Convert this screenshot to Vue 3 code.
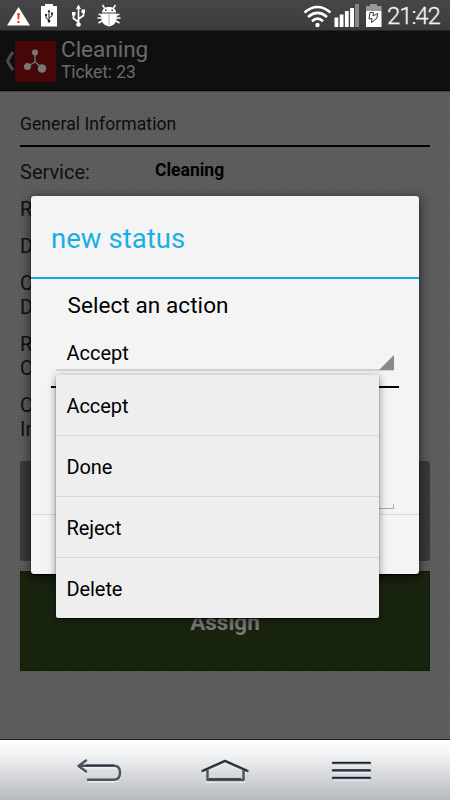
<script setup>
const fields = [
  { label: ['Service:'], value: 'Cleaning' },
  { label: ['R'] },
  { label: ['D'] },
  { label: ['C', 'D'] },
  { label: ['R', 'C'] },
  { label: ['C', 'In'] },
]
const options = ['Accept', 'Done', 'Reject', 'Delete']
</script>

<template>
  <div class="screen">
    <header class="status">
      <svg class="tray" width="124" height="30" viewBox="0 0 124 30">
        <path d="M18.500 7L30 25.500H7Z" fill="#fff" />
        <path d="M17.300 13h2.400l-.5 6.500h-1.400zM17.500 21h2v2h-2z" fill="#f02818" />
        <path d="M41 6h4V4h8v2h4v20.500H41z" fill="#fff" />
        <g fill="none" stroke="#222" stroke-width="1"><path d="M49 11v11M49 20l-3-2v-3M49 18l3-2v-3" /></g>
        <path d="M47.500 12L49 9.500l1.500 2.500zM47.800 20h2.400v2.500h-2.400zM45 14h2v2h-2zM51 12.500h2v2h-2z" fill="#222" />
        <g fill="none" stroke="#fff" stroke-width="1.700"><path d="M78.500 8v15M78.500 22l-5-3.500v-4M78.500 19l5-3.500v-4" /></g>
        <path d="M76 9l2.500-4.500L81 9zM72 12h3.500v3.500H72zM81.500 9.500H85V13h-3.500z" fill="#fff" />
        <circle cx="78.500" cy="24.500" r="2.300" fill="#fff" />
        <path d="M102 12.500C102 9 105 7 109 7s7 2 7 5.500z" fill="#fff" />
        <path d="M101.500 13.500h15v6.500q-1 5-7.500 6.500-6.500-1.500-7.500-6.500z" fill="#fff" />
        <path d="M104.500 8l-2-3M113.500 8l2-3M102 16.500l-1.500-2h-2M102 18h-4.500M102 21l-3.500 2M116 16.500l1.500-2h2M116 18h4.500M116 21l3.500 2" fill="none" stroke="#fff" stroke-width="1.500" />
        <path d="M109 14v11" stroke="#aaa" stroke-width="1" />
        <path d="M105 9.500h1.500V11H105zM111.500 9.500h1.500V11h-1.500z" fill="#333" />
      </svg>
      <svg class="signals" width="84" height="30" viewBox="0 0 84 30">
        <g fill="none" stroke="#fff" stroke-width="2.600">
          <path d="M1.500 12.500Q14.500 1.500 27.500 12.500M5 17Q14.500 8.800 24 17M9 21.200Q14.500 16.200 20 21.200" />
        </g>
        <circle cx="14.500" cy="25" r="2.200" fill="#fff" />
        <path d="M31.500 17.500h3.800V27h-3.800zM36.700 14.500h3.800V27h-3.800zM41.900 11h3.800v16h-3.800zM47.100 8h3.900v19h-3.900z" fill="#fff" />
        <path d="M52 4h4v23h-4z" fill="#888" />
        <path d="M63 6h4V4h7v2h4.500v5H63z" fill="#999" />
        <path d="M63 11h15.500v16H63z" fill="#fff" />
        <path d="M67 12.500h3.500l-.5 3.500 4.500-2.500-.5 4.500-5.500 4.500.5-4-3 .5z" fill="#fff" stroke="#333" stroke-width="1" />
      </svg>
      <span class="clock">21:42</span>
    </header>

    <header class="bar">
      <svg class="up" width="10" height="20" viewBox="0 0 10 20"><path d="M8 1Q5 5 2.500 10q2.500 5 5.500 9" fill="none" stroke="#4a4a4a" stroke-width="3" /></svg>
      <svg class="logo" width="41" height="41" viewBox="0 0 41 41">
        <path d="M0 0h41v41H0z" fill="#470708" />
        <path d="M20 12v9l-7.500 4.500M20 21l7.500 6" fill="none" stroke="#777" stroke-width="1.300" />
        <circle cx="20" cy="11.500" r="3" fill="#777" />
        <circle cx="12.500" cy="25.500" r="3.500" fill="#777" />
        <circle cx="27" cy="27.500" r="4.300" fill="#777" />
      </svg>
      <div class="heading">
        <div class="name">Cleaning</div>
        <div class="ticket">Ticket: 23</div>
      </div>
    </header>

    <main class="content">
      <h2 class="section">General Information</h2>
      <div class="fields">
        <div v-for="(f, i) in fields" :key="i" class="field">
          <div class="label"><div v-for="l in f.label" :key="l">{{ l }}</div></div>
          <div class="value">{{ f.value }}</div>
        </div>
      </div>
      <div class="btn-grey"></div>
      <div class="btn-assign">Assign</div>
    </main>

    <nav class="nav">
      <svg width="450" height="60" viewBox="0 0 450 60">
        <defs>
          <g id="glyphs">
            <path d="M86 20.500L78.500 26l7.500 5.500M80 25.800h34q6 0 6 7t-6 7H88" />
            <path d="M202.500 31L225 21l22.500 10M207.500 30.500v9.500h36v-9.500" />
            <path d="M333 23h37M333 30.500h37M333 38h37" />
          </g>
        </defs>
        <use href="#glyphs" y="1.200" class="glow" />
        <use href="#glyphs" class="ink" />
        <path d="M209 38.800h32M332 22.500h38M332 30h38M332 37.500h38M86 25.200h28M203 30.500L225 20.500l22 10" fill="none" stroke="#171b22" stroke-width="1" />
      </svg>
    </nav>

    <section class="dialog">
      <h1 class="title">new status</h1>
      <div class="body">
        <div class="prompt">Select an action</div>
        <div class="spinner"><span>Accept</span><i class="corner"></i></div>
        <div class="rule"></div>
        <div class="input"></div>
      </div>
      <div class="footer"></div>
    </section>

    <ul class="menu">
      <li v-for="o in options" :key="o">{{ o }}</li>
    </ul>
  </div>
</template>

<style>
body { margin: 0; }
</style>

<style scoped>
.screen { position: relative; display: flex; flex-direction: column; width: 450px; height: 800px; overflow: hidden; font-family: Roboto, sans-serif; color: #000; background: #5b5b5b; }
.status { box-sizing: border-box; height: 30px; flex: none; display: flex; align-items: center; background: linear-gradient(#464646, #3c3c3c); color: #f2f2f2; }
.signals { margin-left: 179px; }
.clock { flex: none; font-size: 24px; font-weight: 300; line-height: 30px; margin: 2px 0 0; letter-spacing: -1.1px; -webkit-text-stroke: .3px #f2f2f2; }
.bar { box-sizing: border-box; height: 61px; flex: none; display: flex; align-items: center; background: #0f0f0f; border-top: 1px solid #242424; border-bottom: 1px solid #000; color: #6b6b6b; }
.up { margin-left: 5px; }
.logo { margin-top: 1px; }
.heading { margin-left: 5px; margin-top: -2px; }
.name { font-size: 22.5px; line-height: 25px; }
.ticket { font-size: 17.5px; line-height: 21px; letter-spacing: -.12px; }
.content { box-sizing: border-box; height: 649px; flex: none; padding: 22px 20px 0; background-color: #5c5c5c; background-image: repeating-linear-gradient(0deg, rgba(255,255,255,.025) 0 1px, transparent 1px 3px), repeating-linear-gradient(90deg, rgba(0,0,0,.045) 0 1px, transparent 1px 3px); border-top: 1px solid #444; border-bottom: 1px solid #222; }
.section { box-sizing: border-box; height: 33px; margin: 0; border-bottom: 2px solid #000; font-size: 17.5px; line-height: 21px; font-weight: 400; color: #0c0c0c; letter-spacing: .08px; }
.fields { box-sizing: border-box; padding-top: 14px; height: 314px; }
.field { display: flex; margin-bottom: 13.300px; }
.label { width: 135px; font-size: 20px; line-height: 23.800px; color: #101010; }
.value { font-size: 17.500px; line-height: 21px; margin-top: -1px; font-weight: 700; }
.btn-grey { height: 100px; border-radius: 3px; background: #3a3a3a; }
.btn-assign { box-sizing: border-box; height: 100px; margin-top: 10px; border: 1px solid #0c200c; background: #19240f; color: #777; font: 700 22.500px/101px Roboto, sans-serif; text-align: center; }
.nav { height: 60px; flex: none; background: linear-gradient(#fff, #f1f2f3 25%, #b6b9bf); }
.nav svg { display: block; }
.glow { fill: none; stroke: #edf1f4; stroke-width: 3; }
.ink { fill: none; stroke: #4b5361; stroke-width: 2.500; stroke-linejoin: round; stroke-linecap: round; }
.dialog { position: absolute; left: 31px; top: 196px; width: 388px; height: 378px; box-sizing: border-box; display: flex; flex-direction: column; background: #f4f4f4; border-radius: 3px; box-shadow: 0 1px 1px 0 #000, 0 3px 10px 2px rgba(0,0,0,.5); }
.title { box-sizing: border-box; height: 83px; flex: none; margin: 0; padding: 2px 20px 0; border-bottom: 2px solid #12ace0; color: #1aafe2; font-size: 27.500px; line-height: 81px; font-weight: 400; letter-spacing: .05px; }
.body { height: 235px; flex: none; padding: 0 20px; }
.prompt { padding: 13px 0 0 16.500px; font-size: 22.500px; line-height: 26px; letter-spacing: .08px; }
.spinner { box-sizing: border-box; height: 38px; margin: 15px 5px 0; padding-left: 10.500px; border-bottom: 2px solid #d4d4d4; display: flex; justify-content: space-between; align-items: flex-end; font-size: 20px; line-height: 32px; }
.corner { width: 15px; height: 15px; margin-bottom: -1px; background: #888; clip-path: polygon(100% 0, 100% 100%, 0 100%); }
.rule { height: 2px; margin-top: 15px; background: #000; }
.input { box-sizing: border-box; height: 5px; margin: 116px 5px 0; border: solid #aaa; border-width: 0 1px 1px; }
.footer { flex: 1; border-top: 1px solid #d9d9d9; }
.menu { position: absolute; left: 56px; top: 375px; width: 323px; height: 243px; margin: 0; padding: 0; list-style: none; background: #eee; border-radius: 2px; box-shadow: 0 1px 1px rgba(0,0,0,.7), 0 2px 8px rgba(0,0,0,.45); }
.menu li { box-sizing: border-box; height: 61px; padding: 1px 10.500px 0; border-bottom: 1px solid #d5d5d5; font-size: 20px; line-height: 60px; letter-spacing: -.08px; }
.menu li:last-child { border-bottom: 0; height: 60px; }
</style>
